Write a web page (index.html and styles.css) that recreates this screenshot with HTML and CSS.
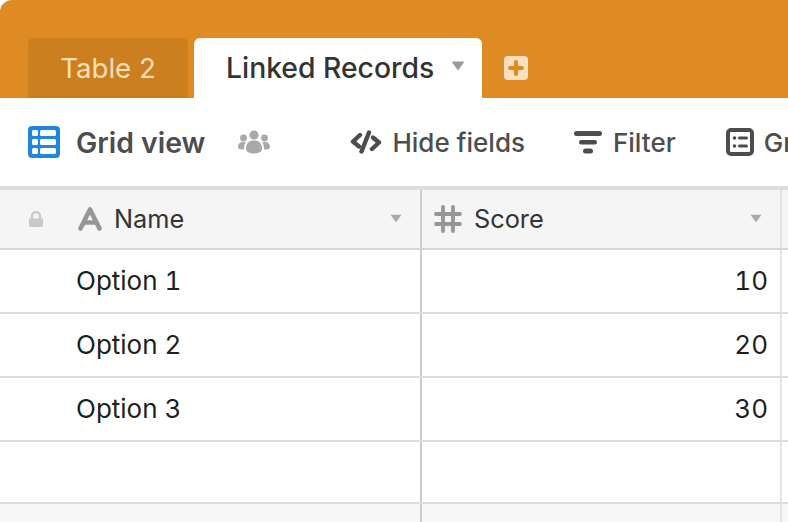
FILE: index.html
```html
<!DOCTYPE html>
<html lang="en">
<head>
<meta charset="utf-8">
<title>Linked Records</title>
<link rel="stylesheet" href="styles.css">
</head>
<body>
<div class="app">
  <header class="tabbar">
    <div class="tab tab-inactive">Table 2</div>
    <div class="tab tab-active">
      <span class="tab-label">Linked Records</span>
      <svg class="tab-caret" viewBox="0 0 14 10"><path d="M0.5 0.5h13L7 9.5z"/></svg>
    </div>
    <svg class="tab-add" viewBox="0 0 24 24">
      <rect width="24" height="24" rx="4" fill="#f8e0bf"/>
      <path d="M12 6v12M6 12h12" stroke="#dd8b22" stroke-width="4" stroke-linecap="round"/>
    </svg>
  </header>
  <div class="toolbar">
    <svg class="icon-grid" viewBox="0 0 32 32">
      <rect width="32" height="32" rx="4" fill="#2088dc"/>
      <g fill="#fff">
        <rect x="4" y="4" width="6" height="6" rx="1.5"/><rect x="12" y="4" width="16" height="6" rx="1.5"/>
        <rect x="4" y="13" width="6" height="6" rx="1.5"/><rect x="12" y="13" width="16" height="6" rx="1.5"/>
        <rect x="4" y="22" width="6" height="6" rx="1.5"/><rect x="12" y="22" width="16" height="6" rx="1.5"/>
      </g>
    </svg>
    <span class="view-name">Grid view</span>
    <svg class="icon-people" viewBox="0 0 32 24" fill="#a9a9a9">
      <circle cx="16" cy="5" r="4.6"/><circle cx="5.5" cy="8" r="3.4"/><circle cx="26.5" cy="8" r="3.4"/>
      <path d="M8 19c0-6 3-8.500 8-8.500s8 2.500 8 8.500c0 3-4 4.500-8 4.500s-8-1.500-8-4.500z"/>
      <path d="M0 17c0-3.500 2-5 5.500-5 1 0 1.800.2 2.400.5C6.500 14 6 16 6 19.500 2.500 19.500 0 19 0 17z"/>
      <path d="M32 17c0-3.500-2-5-5.500-5-1 0-1.800.2-2.400.5 1.400 1.500 1.900 3.500 1.900 7 3.500 0 6-.5 6-2.500z"/>
    </svg>
    <div class="tool tool-hide">
      <svg class="tool-icon-hide" viewBox="0 0 32 24" fill="none" stroke="#4d4d4d" stroke-width="4.400" stroke-linecap="round" stroke-linejoin="round">
        <path d="M10 5 3 11.500l6 5"/><path d="M23 7.500l6 5-7 6.500"/><path d="M19 2.500 11.500 21.500"/>
      </svg>
      <span>Hide fields</span>
    </div>
    <div class="tool tool-filter">
      <svg class="tool-icon-filter" viewBox="0 0 28 24" fill="#4d4d4d">
        <rect x="0" y="1" width="28" height="5" rx="2.500"/><rect x="5" y="10" width="18" height="4.500" rx="2.200"/><rect x="9" y="18.500" width="10" height="5" rx="2.500"/>
      </svg>
      <span>Filter</span>
    </div>
    <div class="tool tool-group">
      <svg class="tool-icon-group" viewBox="0 0 28 28">
        <rect x="2" y="2" width="24" height="24" rx="3" fill="none" stroke="#4d4d4d" stroke-width="4"/>
        <g fill="#4d4d4d">
          <circle cx="8.500" cy="10" r="1.800"/><circle cx="8.500" cy="18" r="1.800"/>
          <rect x="12" y="8.500" width="10" height="3" rx="1.500"/><rect x="12" y="16.500" width="10" height="3" rx="1.500"/>
        </g>
      </svg>
      <span>Group</span>
    </div>
  </div>
  <main class="grid">
    <div class="row row-head">
      <div class="cell cell-name">
        <svg class="icon-lock" viewBox="0 0 16 16" fill="#c9c9c9">
          <path d="M1 7.500h14V14a2 2 0 0 1-2 2H3a2 2 0 0 1-2-2z"/>
          <path d="M4 8V5a4 3.800 0 0 1 8 0v3" fill="none" stroke="#c9c9c9" stroke-width="2.200"/>
        </svg>
        <svg class="icon-a" viewBox="0 0 24 24" fill="none" stroke="#969696" stroke-width="4.600" stroke-linecap="round" stroke-linejoin="round">
          <path d="M2.500 21.500 12 2.500 21.500 21.500"/><path d="M6.500 15.500h11"/>
        </svg>
        <span class="field-label">Name</span>
        <svg class="caret" viewBox="0 0 14 10"><path d="M0.500 0.500h13L7 9.500z"/></svg>
      </div>
      <div class="cell cell-score">
        <svg class="icon-hash" viewBox="0 0 28 28" fill="none" stroke="#969696" stroke-width="3.800" stroke-linecap="round">
          <path d="M9 2v24M19 2v24M2 9h24M2 19h24"/>
        </svg>
        <span class="field-label">Score</span>
        <svg class="caret" viewBox="0 0 14 10"><path d="M0.500 0.500h13L7 9.500z"/></svg>
      </div>
      <div class="cell cell-rest"></div>
    </div>
    <div class="row">
      <div class="cell cell-name"><span class="cell-text">Option 1</span></div>
      <div class="cell cell-score cell-num">10</div>
      <div class="cell cell-rest"></div>
    </div>
    <div class="row">
      <div class="cell cell-name"><span class="cell-text">Option 2</span></div>
      <div class="cell cell-score cell-num">20</div>
      <div class="cell cell-rest"></div>
    </div>
    <div class="row">
      <div class="cell cell-name"><span class="cell-text">Option 3</span></div>
      <div class="cell cell-score cell-num">30</div>
      <div class="cell cell-rest"></div>
    </div>
    <div class="row row-empty">
      <div class="cell cell-name"></div>
      <div class="cell cell-score"></div>
      <div class="cell cell-rest"></div>
    </div>
    <div class="row row-foot">
      <div class="cell cell-name"></div>
      <div class="cell cell-score"></div>
      <div class="cell cell-rest"></div>
    </div>
  </main>
</div>
</body>
</html>
```
FILE: styles.css
```css
* { box-sizing: border-box; }
html, body { margin: 0; padding: 0; height: 100%; overflow: hidden; background: #fff; }
body { font-family: Inter, "Liberation Sans", sans-serif; color: #333; }
.app { width: 788px; height: 522px; overflow: hidden; }

.tabbar {
  height: 98px;
  background: #dd8b22;
  border-top-left-radius: 12px;
  padding: 38px 0 0 28px;
  display: flex;
  align-items: flex-start;
}
.tab { height: 60px; border-radius: 6px 6px 0 0; display: flex; align-items: center; }
.tab-inactive { width: 160px; margin-right: 6px; justify-content: center; background: #cc7f1e; color: #fbdfb9; font-size: 27.6px; }
.tab-active { width: 288px; padding-left: 32px; background: #fff; color: #333; font-size: 28.3px; }
.tab-label { font-weight: 500; }
.tab-caret { width: 14px; height: 10px; margin-left: 17px; margin-top: -4px; fill: #999; }
.tab-add { width: 24px; height: 24px; margin: 18px 0 0 22px; }

.toolbar {
  height: 92px;
  border-bottom: 4px solid #ddd;
  padding-left: 28px;
  display: flex;
  align-items: center;
  white-space: nowrap;
  font-size: 26px;
  font-weight: 500;
  color: #4d4d4d;
}
.icon-grid { width: 32px; height: 32px; flex: none; }
.view-name { margin-left: 16px; font-weight: 600; font-size: 28.4px; }
.icon-people { width: 32px; height: 24px; flex: none; margin-left: 33px; }
.tool { display: flex; align-items: center; flex: none; }
.tool-hide { margin-left: 80px; }
.tool-filter { margin-left: 49px; }
.tool-group { margin-left: 50px; }
.tool-icon-hide { width: 32px; height: 24px; margin-right: 10px; }
.tool-icon-filter { width: 28px; height: 24px; margin-right: 11px; }
.tool-icon-group { width: 28px; height: 28px; margin-right: 10px; }

.grid { display: flex; flex-direction: column; }
.row { height: 64px; display: flex; border-bottom: 2px solid #ddd; }
.row-head { height: 60px; background: #f5f5f5; border-bottom-color: #d5d5d5; }
.row-empty { height: 62px; }
.row-foot { height: 20px; background: #f7f7f7; border-bottom: 0; }
.cell { display: flex; align-items: center; font-size: 26px; color: #1f1f1f; padding-bottom: 1px; font-variant-numeric: tabular-nums; }
.cell-name { width: 422px; border-right: 2px solid #ccc; padding-left: 76px; }
.cell-score { width: 360px; border-right: 2px solid #e4e4e4; padding-left: 12px; padding-right: 12px; }
.cell-rest { flex: 1; }
.cell-num { justify-content: flex-end; }
.row-head .cell-name { padding-left: 28px; }
.icon-lock { width: 16px; height: 16px; flex: none; }
.icon-a { width: 24px; height: 24px; flex: none; margin: 0 12px 0 34px; }
.icon-hash { width: 28px; height: 28px; flex: none; margin-right: 12px; }
.field-label { color: #333; flex: 1; font-size: 25.3px; }
.caret { width: 12px; height: 9px; flex: none; fill: #a9a9a9; margin-right: 18px; }
.cell-score .caret { margin-right: 6px; }
```
